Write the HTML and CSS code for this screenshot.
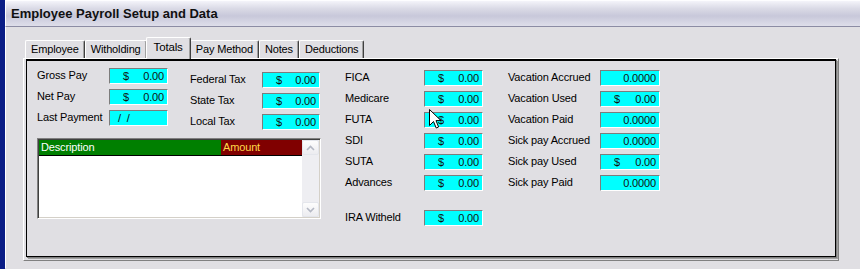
FILE: index.html
```html
<!DOCTYPE html>
<html>
<head>
<meta charset="utf-8">
<link rel="stylesheet" href="styles.css">
</head>
<body>
<div class="window">
  <div class="titlebar">Employee Payroll Setup and Data</div>
  <div class="client">
    <div class="tabs">
      <div class="tab">Employee</div>
      <div class="tab">Witholding</div>
      <div class="tab active">Totals</div>
      <div class="tab">Pay Method</div>
      <div class="tab">Notes</div>
      <div class="tab">Deductions</div>
    </div>
    <div class="panel">
      <div class="frame">
        <div class="leftblock">
          <div class="topblock">
            <div class="col cola">
              <div class="row"><span class="lbl">Gross Pay</span><span class="fld"><span class="cur">$</span><span class="val">0.00</span></span></div>
              <div class="row"><span class="lbl">Net Pay</span><span class="fld"><span class="cur">$</span><span class="val">0.00</span></span></div>
              <div class="row"><span class="lbl">Last Payment</span><span class="fld date">/&nbsp;&nbsp;/</span></div>
            </div>
            <div class="col colb">
              <div class="row"><span class="lbl">Federal Tax</span><span class="fld"><span class="cur">$</span><span class="val">0.00</span></span></div>
              <div class="row"><span class="lbl">State Tax</span><span class="fld"><span class="cur">$</span><span class="val">0.00</span></span></div>
              <div class="row"><span class="lbl">Local Tax</span><span class="fld"><span class="cur">$</span><span class="val">0.00</span></span></div>
            </div>
          </div>
          <div class="listbox">
            <div class="listmain">
              <div class="listhead">
                <span class="hdesc">Description</span>
                <span class="hamt">Amount</span>
              </div>
            </div>
            <div class="scroll">
              <div class="sbtn"><svg width="9" height="6" viewBox="0 0 9 6"><path d="M1 5 L4.5 1.5 L8 5" fill="none" stroke="#b4b8c4" stroke-width="1.6"/></svg></div>
              <div class="strack"></div>
              <div class="sbtn"><svg width="9" height="6" viewBox="0 0 9 6"><path d="M1 1 L4.5 4.5 L8 1" fill="none" stroke="#b4b8c4" stroke-width="1.6"/></svg></div>
            </div>
          </div>
        </div>
        <div class="col colc">
          <div class="row"><span class="lbl">FICA</span><span class="fld"><span class="cur">$</span><span class="val">0.00</span></span></div>
          <div class="row"><span class="lbl">Medicare</span><span class="fld"><span class="cur">$</span><span class="val">0.00</span></span></div>
          <div class="row"><span class="lbl">FUTA</span><span class="fld"><span class="cur">$</span><span class="val">0.00</span></span></div>
          <div class="row"><span class="lbl">SDI</span><span class="fld"><span class="cur">$</span><span class="val">0.00</span></span></div>
          <div class="row"><span class="lbl">SUTA</span><span class="fld"><span class="cur">$</span><span class="val">0.00</span></span></div>
          <div class="row"><span class="lbl">Advances</span><span class="fld"><span class="cur">$</span><span class="val">0.00</span></span></div>
          <div class="row ira"><span class="lbl">IRA Witheld</span><span class="fld"><span class="cur">$</span><span class="val">0.00</span></span></div>
        </div>
        <div class="col cold">
          <div class="row"><span class="lbl">Vacation Accrued</span><span class="fld"><span class="val">0.0000</span></span></div>
          <div class="row"><span class="lbl">Vacation Used</span><span class="fld"><span class="cur">$</span><span class="val">0.00</span></span></div>
          <div class="row"><span class="lbl">Vacation Paid</span><span class="fld"><span class="val">0.0000</span></span></div>
          <div class="row"><span class="lbl">Sick pay Accrued</span><span class="fld"><span class="val">0.0000</span></span></div>
          <div class="row"><span class="lbl">Sick pay Used</span><span class="fld"><span class="cur">$</span><span class="val">0.00</span></span></div>
          <div class="row"><span class="lbl">Sick pay Paid</span><span class="fld"><span class="val">0.0000</span></span></div>
        </div>
      </div>
    </div>
  </div>
</div>
<svg class="cursor" width="13" height="21" viewBox="0 0 13 21"><path d="M0.5 0.5 L0.5 16.5 L4.5 12.5 L7.2 19 L9.6 18 L7 11.6 L12 11.6 Z" fill="#fff" stroke="#000" stroke-width="1" stroke-linejoin="miter"/></svg>
</body>
</html>
```
FILE: styles.css
```css
html, body {
  margin: 0;
  padding: 0;
  background: #e0dfe3;
  width: 860px;
  height: 269px;
  overflow: hidden;
}
body {
  font-family: "Liberation Sans", Arial, sans-serif;
  font-size: 11px;
  letter-spacing: -0.15px;
  color: #000;
}
.window {
  border-left: 5px solid #0a1d86;
  height: 269px;
  box-sizing: border-box;
}
.titlebar {
  height: 27px;
  box-sizing: border-box;
  border-top: 1px solid #fdfdff;
  border-left: 1px solid #fdfdff;
  border-bottom: 1px solid #8c8ca4;
  background: linear-gradient(#f4f4fa 0%, #dadae6 30%, #c8c8da 60%, #dedeea 100%);
  font-size: 13px;
  font-weight: bold;
  letter-spacing: 0;
  color: #101010;
  padding-left: 5px;
  line-height: 26px;
}
.client {
  border-left: 1px solid #fff;
  padding: 10px 0 0 17px;
  height: 241px;
  box-sizing: border-box;
}
.tabs {
  display: flex;
  align-items: flex-end;
  height: 22px;
  margin-bottom: -1px;
  padding-left: 2px;
}
.tab {
  position: relative;
  height: 18px;
  box-sizing: border-box;
  padding: 0 5px;
  border-top: 1px solid #fff;
  border-left: 1px solid #fff;
  border-right: 1px solid #404040;
  box-shadow: inset -1px 0 0 #a0a0a0;
  border-radius: 2px 2px 0 0;
  line-height: 17px;
  margin-bottom: 1px;
  background: #e0dfe3;
}
.tab.active {
  height: 22px;
  margin: 0 -1px 0 -1px;
  padding: 0 7px;
  line-height: 18px;
  z-index: 2;
  font-size: 11.5px;
}
.panel {
  width: 816px;
  box-sizing: border-box;
  border: 1px solid;
  border-color: #fff #808080 #808080 #fff;
  padding: 0 2px 3px 2px;
}
.frame {
  height: 198px;
  box-sizing: border-box;
  border: 1px solid #000;
  border-top-width: 2px;
  box-shadow: 1px 1px 0 #808080, 2px 2px 0 #a0a0a0;
  display: flex;
  align-items: flex-start;
  padding: 7px 0 0 10px;
}
.leftblock {
  display: flex;
  flex-direction: column;
  width: 284px;
}
.topblock {
  display: flex;
  align-items: flex-start;
}
.col {
  display: flex;
  flex-direction: column;
  gap: 5px;
}
.row {
  display: flex;
  align-items: center;
  height: 16px;
}
.lbl {
  white-space: nowrap;
  margin-top: -2px;
}
.cola { width: 153px; }
.cola .lbl { width: 72px; }
.cola .fld { width: 59px; }
.colb { width: 131px; margin-top: 4px; }
.colb .lbl { width: 72px; }
.colb .fld { width: 58px; }
.colc { margin-left: 24px; margin-top: 2px; }
.colc .lbl { width: 79px; }
.colc .fld { width: 59px; }
.colc .ira { margin-top: 14px; }
.cold { margin-left: 25px; margin-top: 2px; }
.cold .lbl { width: 92px; }
.cold .fld { width: 60px; }
.fld {
  height: 16px;
  box-sizing: border-box;
  background: #00ffff;
  border: 1px solid;
  border-color: #7c7c7c #ffffff #ffffff #7c7c7c;
  display: flex;
  align-items: center;
  line-height: 14px;
  padding: 0 3px 0 13px;
  color: #111;
}
.cur { flex: 0 0 auto; }
.val { margin-left: auto; }
.fld.date { padding-left: 8px; }
.listbox {
  margin-top: 8px;
  height: 81px;
  box-sizing: border-box;
  border: 1px solid;
  border-color: #808080 #fff #fff #808080;
  box-shadow: inset 1px 1px 0 #404040, inset -1px -1px 0 #d4d0c8;
  background: #fff;
  display: flex;
  padding: 1px;
}
.listmain {
  flex: 1;
}
.listhead {
  display: flex;
  height: 15px;
  border-bottom: 1px solid #000;
  line-height: 14px;
}
.hdesc {
  width: 182px;
  background: #007f00;
  color: #fff;
  padding-left: 2px;
  box-sizing: border-box;
}
.hamt {
  flex: 1;
  background: #800000;
  color: #ffd84a;
  padding-left: 2px;
}
.scroll {
  width: 17px;
  display: flex;
  flex-direction: column;
  background: #eeeef2;
}
.sbtn {
  height: 15px;
  box-sizing: border-box;
  border: 1px solid #e4e6ec;
  border-radius: 2px;
  background: linear-gradient(#fdfdfd, #ececf0);
  display: flex;
  align-items: center;
  justify-content: center;
}
.strack {
  flex: 1;
}
.cursor {
  position: absolute;
  left: 429px;
  top: 109px;
}
```
